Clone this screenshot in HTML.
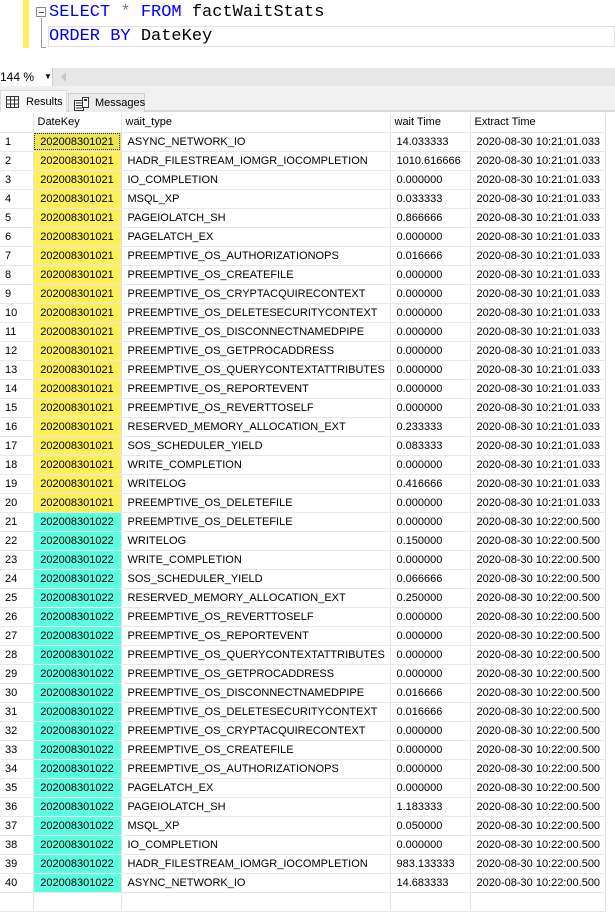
<!DOCTYPE html>
<html><head><meta charset="utf-8"><style>
*{margin:0;padding:0;box-sizing:border-box}
body{width:615px;height:894px;overflow:hidden;background:#fff;font-family:"Liberation Sans",Arial,sans-serif;position:relative}
.code{position:absolute;left:0;top:0;width:615px;height:68px;background:#fff}
.ybar{position:absolute;left:23px;top:0;width:6px;height:48px;background:#fdf05c}
.fold{position:absolute;left:36px;top:7px;width:10px;height:10px;border:1px solid #888;background:#fff}
.fold:after{content:"";position:absolute;left:2px;top:4px;width:5px;height:1px;background:#555}
.vl{position:absolute;left:41px;top:18px;width:1px;height:30px;background:#999}
.vl2{position:absolute;left:41px;top:47px;width:5px;height:1px;background:#999}
.ln{position:absolute;left:49px;font-family:"Liberation Mono",monospace;font-size:17px;white-space:pre;color:#000}
.k{color:#0000ff}.g{color:#808080}
.cur{position:absolute;left:48px;top:26px;width:567px;height:21px;border:1px solid #e0e0e0}
.zbar{position:absolute;left:0;top:68px;width:615px;height:18px;background:#e6e7e9}
.zbox{position:absolute;left:0;top:68px;width:53px;height:18px;background:#fff;border-right:1px solid #ccc;font-size:12px;line-height:18px}
.tabs{position:absolute;left:0;top:86px;width:615px;height:26px;background:#f0f0f0;border-bottom:2px solid #d8d8d8}
.t1{position:absolute;left:0;top:4px;width:67px;height:22px;background:#f8f8f8;border:1px solid #dcdcdc;border-bottom:none;font-size:11px;line-height:22px;padding-left:25px}
.t2{position:absolute;left:68px;top:7px;width:77px;height:19px;background:#ececec;border:1px solid #d0d0d0;border-bottom:none;font-size:11px;line-height:19px;padding-left:26px}
table{position:absolute;left:0;top:113px;width:605px;border-collapse:collapse;table-layout:fixed;font-size:11px;color:#000}
td{height:19px;border-right:1px solid #e2e2e2;border-bottom:1px solid #e8e8e8;white-space:nowrap;overflow:hidden;padding-left:6px;line-height:18px}
tr.h td{background:#fff;padding-left:4px}
td.n{padding-left:5px}
td.y{background:#fdf05c;text-align:center;padding-left:0}
td.c{background:#5cfde0;text-align:center;padding-left:0}
td.s{background:#ece455;outline:1px dotted #333;outline-offset:-2px}
</style></head><body>
<div class="code">
<div class="ybar"></div>
<div class="fold"></div><div class="vl"></div><div class="vl2"></div>
<div class="cur"></div>
<div class="ln" style="top:3px"><span class="k">SELECT</span> <span class="g">*</span> <span class="k">FROM</span> factWaitStats</div>
<div class="ln" style="top:27px"><span class="k">ORDER BY</span> DateKey</div>
</div>
<div class="zbar"></div>
<div class="zbox">144 % <span style="position:absolute;left:44px;top:0;font-size:8px">▼</span></div>
<div style="position:absolute;left:61px;top:72px;width:0;height:0;border-top:5px solid transparent;border-bottom:5px solid transparent;border-right:5px solid #c8c8c8"></div>
<div class="tabs">
<div class="t1"><svg style="position:absolute;left:5px;top:5px" width="13" height="12"><rect x=".5" y=".5" width="12" height="11" fill="#fff" stroke="#333"/><path d="M.5 4h12M.5 8h12M4.5 .5v11M8.5 .5v11" stroke="#333"/></svg>Results</div>
<div class="t2"><svg style="position:absolute;left:5px;top:3px" width="15" height="14"><rect x=".5" y="3.5" width="9" height="10" fill="#fff" stroke="#333"/><path d="M2 6h6M2 8.5h6M2 11h6" stroke="#333"/><rect x="8.5" y=".5" width="6" height="10" fill="#fff" stroke="#333"/><rect x="10" y="2" width="3" height="2" fill="#333"/></svg>Messages</div>
</div>
<table>
<colgroup><col style="width:33px"><col style="width:88px"><col style="width:269px"><col style="width:80px"><col style="width:135px"></colgroup>
<tr class="h"><td></td><td>DateKey</td><td>wait_type</td><td>wait Time</td><td>Extract Time</td></tr>
<tr><td class="n">1</td><td class="y s">202008301021</td><td>ASYNC_NETWORK_IO</td><td>14.033333</td><td>2020-08-30 10:21:01.033</td></tr>
<tr><td class="n">2</td><td class="y">202008301021</td><td>HADR_FILESTREAM_IOMGR_IOCOMPLETION</td><td>1010.616666</td><td>2020-08-30 10:21:01.033</td></tr>
<tr><td class="n">3</td><td class="y">202008301021</td><td>IO_COMPLETION</td><td>0.000000</td><td>2020-08-30 10:21:01.033</td></tr>
<tr><td class="n">4</td><td class="y">202008301021</td><td>MSQL_XP</td><td>0.033333</td><td>2020-08-30 10:21:01.033</td></tr>
<tr><td class="n">5</td><td class="y">202008301021</td><td>PAGEIOLATCH_SH</td><td>0.866666</td><td>2020-08-30 10:21:01.033</td></tr>
<tr><td class="n">6</td><td class="y">202008301021</td><td>PAGELATCH_EX</td><td>0.000000</td><td>2020-08-30 10:21:01.033</td></tr>
<tr><td class="n">7</td><td class="y">202008301021</td><td>PREEMPTIVE_OS_AUTHORIZATIONOPS</td><td>0.016666</td><td>2020-08-30 10:21:01.033</td></tr>
<tr><td class="n">8</td><td class="y">202008301021</td><td>PREEMPTIVE_OS_CREATEFILE</td><td>0.000000</td><td>2020-08-30 10:21:01.033</td></tr>
<tr><td class="n">9</td><td class="y">202008301021</td><td>PREEMPTIVE_OS_CRYPTACQUIRECONTEXT</td><td>0.000000</td><td>2020-08-30 10:21:01.033</td></tr>
<tr><td class="n">10</td><td class="y">202008301021</td><td>PREEMPTIVE_OS_DELETESECURITYCONTEXT</td><td>0.000000</td><td>2020-08-30 10:21:01.033</td></tr>
<tr><td class="n">11</td><td class="y">202008301021</td><td>PREEMPTIVE_OS_DISCONNECTNAMEDPIPE</td><td>0.000000</td><td>2020-08-30 10:21:01.033</td></tr>
<tr><td class="n">12</td><td class="y">202008301021</td><td>PREEMPTIVE_OS_GETPROCADDRESS</td><td>0.000000</td><td>2020-08-30 10:21:01.033</td></tr>
<tr><td class="n">13</td><td class="y">202008301021</td><td>PREEMPTIVE_OS_QUERYCONTEXTATTRIBUTES</td><td>0.000000</td><td>2020-08-30 10:21:01.033</td></tr>
<tr><td class="n">14</td><td class="y">202008301021</td><td>PREEMPTIVE_OS_REPORTEVENT</td><td>0.000000</td><td>2020-08-30 10:21:01.033</td></tr>
<tr><td class="n">15</td><td class="y">202008301021</td><td>PREEMPTIVE_OS_REVERTTOSELF</td><td>0.000000</td><td>2020-08-30 10:21:01.033</td></tr>
<tr><td class="n">16</td><td class="y">202008301021</td><td>RESERVED_MEMORY_ALLOCATION_EXT</td><td>0.233333</td><td>2020-08-30 10:21:01.033</td></tr>
<tr><td class="n">17</td><td class="y">202008301021</td><td>SOS_SCHEDULER_YIELD</td><td>0.083333</td><td>2020-08-30 10:21:01.033</td></tr>
<tr><td class="n">18</td><td class="y">202008301021</td><td>WRITE_COMPLETION</td><td>0.000000</td><td>2020-08-30 10:21:01.033</td></tr>
<tr><td class="n">19</td><td class="y">202008301021</td><td>WRITELOG</td><td>0.416666</td><td>2020-08-30 10:21:01.033</td></tr>
<tr><td class="n">20</td><td class="y">202008301021</td><td>PREEMPTIVE_OS_DELETEFILE</td><td>0.000000</td><td>2020-08-30 10:21:01.033</td></tr>
<tr><td class="n">21</td><td class="c">202008301022</td><td>PREEMPTIVE_OS_DELETEFILE</td><td>0.000000</td><td>2020-08-30 10:22:00.500</td></tr>
<tr><td class="n">22</td><td class="c">202008301022</td><td>WRITELOG</td><td>0.150000</td><td>2020-08-30 10:22:00.500</td></tr>
<tr><td class="n">23</td><td class="c">202008301022</td><td>WRITE_COMPLETION</td><td>0.000000</td><td>2020-08-30 10:22:00.500</td></tr>
<tr><td class="n">24</td><td class="c">202008301022</td><td>SOS_SCHEDULER_YIELD</td><td>0.066666</td><td>2020-08-30 10:22:00.500</td></tr>
<tr><td class="n">25</td><td class="c">202008301022</td><td>RESERVED_MEMORY_ALLOCATION_EXT</td><td>0.250000</td><td>2020-08-30 10:22:00.500</td></tr>
<tr><td class="n">26</td><td class="c">202008301022</td><td>PREEMPTIVE_OS_REVERTTOSELF</td><td>0.000000</td><td>2020-08-30 10:22:00.500</td></tr>
<tr><td class="n">27</td><td class="c">202008301022</td><td>PREEMPTIVE_OS_REPORTEVENT</td><td>0.000000</td><td>2020-08-30 10:22:00.500</td></tr>
<tr><td class="n">28</td><td class="c">202008301022</td><td>PREEMPTIVE_OS_QUERYCONTEXTATTRIBUTES</td><td>0.000000</td><td>2020-08-30 10:22:00.500</td></tr>
<tr><td class="n">29</td><td class="c">202008301022</td><td>PREEMPTIVE_OS_GETPROCADDRESS</td><td>0.000000</td><td>2020-08-30 10:22:00.500</td></tr>
<tr><td class="n">30</td><td class="c">202008301022</td><td>PREEMPTIVE_OS_DISCONNECTNAMEDPIPE</td><td>0.016666</td><td>2020-08-30 10:22:00.500</td></tr>
<tr><td class="n">31</td><td class="c">202008301022</td><td>PREEMPTIVE_OS_DELETESECURITYCONTEXT</td><td>0.016666</td><td>2020-08-30 10:22:00.500</td></tr>
<tr><td class="n">32</td><td class="c">202008301022</td><td>PREEMPTIVE_OS_CRYPTACQUIRECONTEXT</td><td>0.000000</td><td>2020-08-30 10:22:00.500</td></tr>
<tr><td class="n">33</td><td class="c">202008301022</td><td>PREEMPTIVE_OS_CREATEFILE</td><td>0.000000</td><td>2020-08-30 10:22:00.500</td></tr>
<tr><td class="n">34</td><td class="c">202008301022</td><td>PREEMPTIVE_OS_AUTHORIZATIONOPS</td><td>0.000000</td><td>2020-08-30 10:22:00.500</td></tr>
<tr><td class="n">35</td><td class="c">202008301022</td><td>PAGELATCH_EX</td><td>0.000000</td><td>2020-08-30 10:22:00.500</td></tr>
<tr><td class="n">36</td><td class="c">202008301022</td><td>PAGEIOLATCH_SH</td><td>1.183333</td><td>2020-08-30 10:22:00.500</td></tr>
<tr><td class="n">37</td><td class="c">202008301022</td><td>MSQL_XP</td><td>0.050000</td><td>2020-08-30 10:22:00.500</td></tr>
<tr><td class="n">38</td><td class="c">202008301022</td><td>IO_COMPLETION</td><td>0.000000</td><td>2020-08-30 10:22:00.500</td></tr>
<tr><td class="n">39</td><td class="c">202008301022</td><td>HADR_FILESTREAM_IOMGR_IOCOMPLETION</td><td>983.133333</td><td>2020-08-30 10:22:00.500</td></tr>
<tr><td class="n">40</td><td class="c">202008301022</td><td>ASYNC_NETWORK_IO</td><td>14.683333</td><td>2020-08-30 10:22:00.500</td></tr>
<tr><td></td><td></td><td></td><td></td><td></td></tr>
</table>
</body></html>
